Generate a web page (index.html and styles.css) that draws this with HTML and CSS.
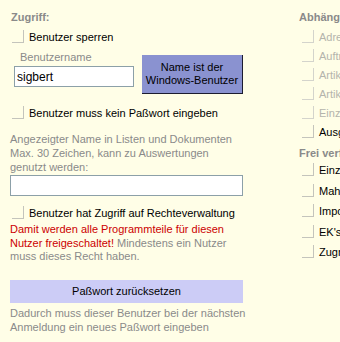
FILE: index.html
```html
<!DOCTYPE html>
<html lang="de">
<head>
    <meta charset="UTF-8">
    <title>Benutzerrechte</title>
    <link rel="stylesheet" href="styles.css">
</head>
<body>

<div class="page">
    <!-- linke Spalte: Zugriff -->
    <div class="col-left">
        <div class="section-title">Zugriff:</div>

        <label class="check-row"><span class="check"></span>Benutzer sperren</label>

        <div class="user-line">
            <div class="user-field">
                <div class="field-label">Benutzername</div>
                <input class="text-input small" type="text" value="sigbert">
            </div>
            <button class="btn-windows">Name ist der<br>Windows-Benutzer</button>
        </div>

        <label class="check-row gap-top"><span class="check"></span>Benutzer muss kein Paßwort eingeben</label>

        <p class="hint first">Angezeigter Name in Listen und Dokumenten<br>Max. 30 Zeichen, kann zu Auswertungen<br>genutzt werden:</p>
        <input class="text-input wide" type="text" value="">

        <label class="check-row gap-top2"><span class="check"></span>Benutzer hat Zugriff auf Rechteverwaltung</label>
        <p class="hint warn"><span class="red">Damit werden alle Programmteile für diesen<br>Nutzer freigeschaltet!</span> Mindestens ein Nutzer<br>muss dieses Recht haben.</p>

        <button class="btn-reset">Paßwort zurücksetzen</button>
        <p class="hint last">Dadurch muss dieser Benutzer bei der nächsten<br>Anmeldung ein neues Paßwort eingeben</p>
    </div>

    <!-- rechte Spalte: abhängige Rechte -->
    <div class="col-right">
        <div class="section-title">Abhängige Rechte:</div>
        <label class="check-row off"><span class="check"></span>Adressen bearbeiten</label>
        <label class="check-row off"><span class="check"></span>Aufträge löschen</label>
        <label class="check-row off"><span class="check"></span>Artikel anlegen</label>
        <label class="check-row off"><span class="check"></span>Artikelpreise ändern</label>
        <label class="check-row off"><span class="check"></span>Einzelpreise ändern</label>
        <label class="check-row"><span class="check"></span>Ausgaben sehen</label>

        <div class="section-title sub">Frei verfügbar:</div>
        <div class="free-list">
            <label class="check-row"><span class="check"></span>Einzahlungen buchen</label>
            <label class="check-row"><span class="check"></span>Mahnungen schreiben</label>
            <label class="check-row"><span class="check"></span>Import von Daten</label>
            <label class="check-row"><span class="check"></span>EK's sehen</label>
            <label class="check-row"><span class="check"></span>Zugriff auf Statistik</label>
        </div>
    </div>
</div>

</body>
</html>
```

FILE: styles.css
```css
body {
    margin: 0;
    padding: 0;
    background-color: #fffee7;
    font-family: "Liberation Sans", Arial, sans-serif;
    font-size: 11px;
    color: #000;
    overflow: hidden;
}

.page {
    display: flex;
    width: 520px;
    padding-top: 10px;
}

.col-left {
    width: 233px;
    margin-left: 10px;
    flex-shrink: 0;
}

.col-right {
    margin-left: 55px;
    white-space: nowrap;
}

.section-title {
    font-weight: bold;
    color: #8a8a8a;
    line-height: 14px;
    height: 14px;
    padding-left: 1px;
}

.section-title.sub {
    margin-top: 4px;
}

/* Checkbox-Zeilen */
.check-row {
    display: flex;
    align-items: flex-start;
    height: 19px;
    line-height: 19px;
    padding-left: 2px;
    white-space: nowrap;
}

.col-left .check-row:first-of-type {
    margin-top: 4px;
}

.col-right > .section-title + .check-row {
    margin-top: 4px;
}

.col-right .check-row {
    padding-left: 4px;
}

.check {
    width: 11px;
    height: 12px;
    margin-top: 2px;
    margin-right: 5px;
    border-right: 1px solid #c4c4bc;
    border-bottom: 1px solid #c4c4bc;
    flex-shrink: 0;
}

.check-row.off {
    color: #b4b4ac;
}

.check-row.off .check {
    border-color: #d4d4cc;
}

.free-list .check-row {
    height: 20.5px;
    line-height: 20.5px;
}

.free-list .check {
    margin-top: 3px;
}

.gap-top {
    margin-top: 10px;
}

.gap-top2 {
    margin-top: 8px;
}

/* Benutzername + Button */
.user-line {
    display: flex;
    align-items: flex-start;
    margin-top: 3px;
}

.user-field {
    padding-left: 4px;
}

.field-label {
    color: #8a8a8a;
    line-height: 14px;
    padding-left: 6px;
}

.text-input {
    display: block;
    box-sizing: border-box;
    border: 1px solid #8ca0a8;
    background-color: #fff;
    font-family: "Liberation Sans", Arial, sans-serif;
    padding: 0 2px;
    outline: none;
}

.text-input.small {
    width: 120px;
    height: 21px;
    margin-top: 2px;
    font-size: 12px;
}

.text-input.wide {
    width: 233px;
    height: 21px;
    margin-top: 1px;
}

.btn-windows {
    width: 101px;
    height: 39px;
    margin-top: 5px;
    margin-left: 8px;
    padding: 0;
    background-color: #8a92d0;
    border: none;
    border-right: 1px solid #1c1c30;
    border-bottom: 1px solid #1c1c30;
    font-family: "Liberation Sans", Arial, sans-serif;
    font-size: 11px;
    line-height: 13px;
    color: #000;
}

/* graue Hinweistexte */
.hint {
    margin: 0;
    color: #8a8a8a;
    line-height: 14px;
    white-space: nowrap;
}

.hint.first {
    margin-top: 9px;
}

.hint.warn {
    line-height: 13.5px;
}

.hint.last {
    margin-top: 3px;
}

.red {
    color: #cc0000;
}

.btn-reset {
    display: block;
    width: 233px;
    height: 23px;
    margin-top: 16px;
    padding: 0;
    border: none;
    background-color: #ccccf6;
    font-family: "Liberation Sans", Arial, sans-serif;
    font-size: 11px;
    color: #000;
}
```
